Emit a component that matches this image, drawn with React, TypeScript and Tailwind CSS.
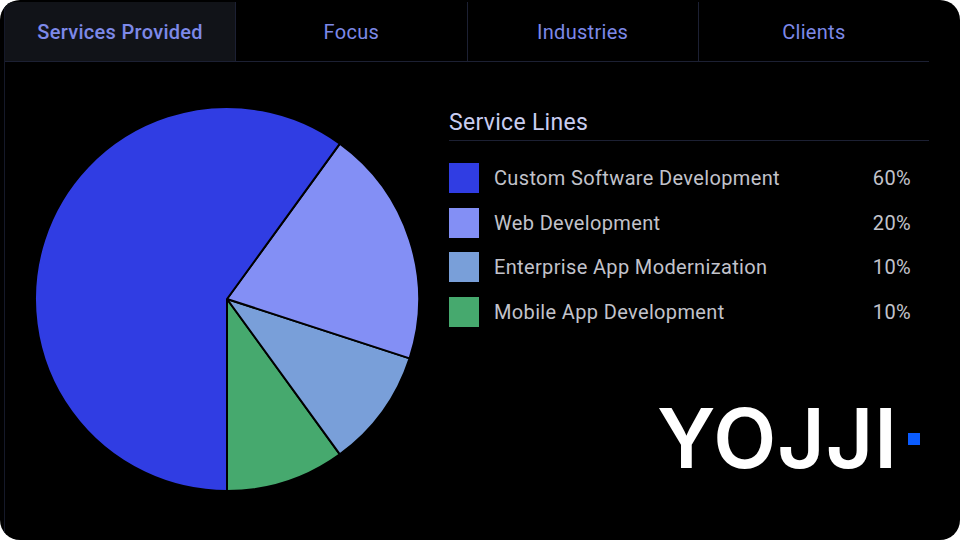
import React from "react";

const slices = [
  { label: "Mobile App Development", pct: 10, color: "#46a96e" },
  { label: "Enterprise App Modernization", pct: 10, color: "#799fd9" },
  { label: "Web Development", pct: 20, color: "#838ff5" },
  { label: "Custom Software Development", pct: 60, color: "#303de3" },
];

const legend = [
  { label: "Custom Software Development", pct: "60%", box: "bg-[#303de3]" },
  { label: "Web Development", pct: "20%", box: "bg-[#838ff5]" },
  { label: "Enterprise App Modernization", pct: "10%", box: "bg-[#799fd9]" },
  { label: "Mobile App Development", pct: "10%", box: "bg-[#46a96e]" },
];

const tabs = ["Services Provided", "Focus", "Industries", "Clients"];

// angle measured from straight down, going towards the right side
function point(cx: number, cy: number, r: number, deg: number) {
  const a = (deg * Math.PI) / 180;
  return [cx + r * Math.sin(a), cy + r * Math.cos(a)];
}

function Pie() {
  const cx = 194;
  const cy = 194;
  const r = 192;
  let start = 0;
  return (
    <svg width="388" height="388" viewBox="0 0 388 388">
      {slices.map((s) => {
        const end = start + (s.pct / 100) * 360;
        const [x1, y1] = point(cx, cy, r, start);
        const [x2, y2] = point(cx, cy, r, end);
        const large = end - start > 180 ? 1 : 0;
        const d = `M${cx} ${cy} L${x1} ${y1} A${r} ${r} 0 ${large} 0 ${x2} ${y2} Z`;
        start = end;
        return <path key={s.label} d={d} fill={s.color} stroke="#000" strokeWidth="2" strokeLinejoin="round" />;
      })}
    </svg>
  );
}

export default function App() {
  return (
    <div className="w-[960px] h-[540px] bg-white">
      <div className="w-[960px] h-[540px] bg-black rounded-[20px] overflow-hidden pl-[4px] pt-[2px] font-['Roboto',sans-serif]">
        <div className="w-[925px] h-full border-l border-[#151929] flex flex-col">
          {/* tabs */}
          <div className="flex h-[60px] border-b border-[#1c2033]">
            {tabs.map((t, i) => (
              <div
                key={t}
                className={`flex-1 flex items-center justify-center text-[20px] tracking-[0.3px] text-[#7d89e8] ${
                  i === 0 ? "bg-[#111318] font-medium" : ""
                } ${i < tabs.length - 1 ? "border-r border-[#1c2033]" : ""}`}
              >
                {t}
              </div>
            ))}
          </div>

          <div className="flex flex-1">
            {/* pie */}
            <div className="w-[444px] pl-[28px] pt-[43px]">
              <Pie />
            </div>

            {/* legend + logo */}
            <div className="flex-1 flex flex-col pt-[46px]">
              <div className="text-[23px] leading-[29px] tracking-[0.3px] text-[#c9cdf0] pb-[3px] border-b border-[#1c2033]">
                Service Lines
              </div>
              <div className="flex flex-col gap-[14.7px] mt-[22px] pr-[18px]">
                {legend.map((l) => (
                  <div key={l.label} className="flex items-center h-[30px]">
                    <div className={`w-[30px] h-[30px] ${l.box}`} />
                    <span className="ml-[15px] text-[20px] tracking-[0.35px] text-[#c2c3cb]">{l.label}</span>
                    <span className="ml-auto text-[20px] tracking-[0.35px] text-[#c2c3cb]">{l.pct}</span>
                  </div>
                ))}
              </div>
              <div className="flex items-center justify-end pr-[9px] mt-[71px]">
                <span className="text-[82px] leading-none font-semibold text-white tracking-[1px] font-['Inter',sans-serif]">
                  YOJJI
                </span>
                <span className="w-[12px] h-[12px] bg-[#0a5cff] ml-[10px]" />
              </div>
            </div>
          </div>
        </div>
      </div>
    </div>
  );
}
